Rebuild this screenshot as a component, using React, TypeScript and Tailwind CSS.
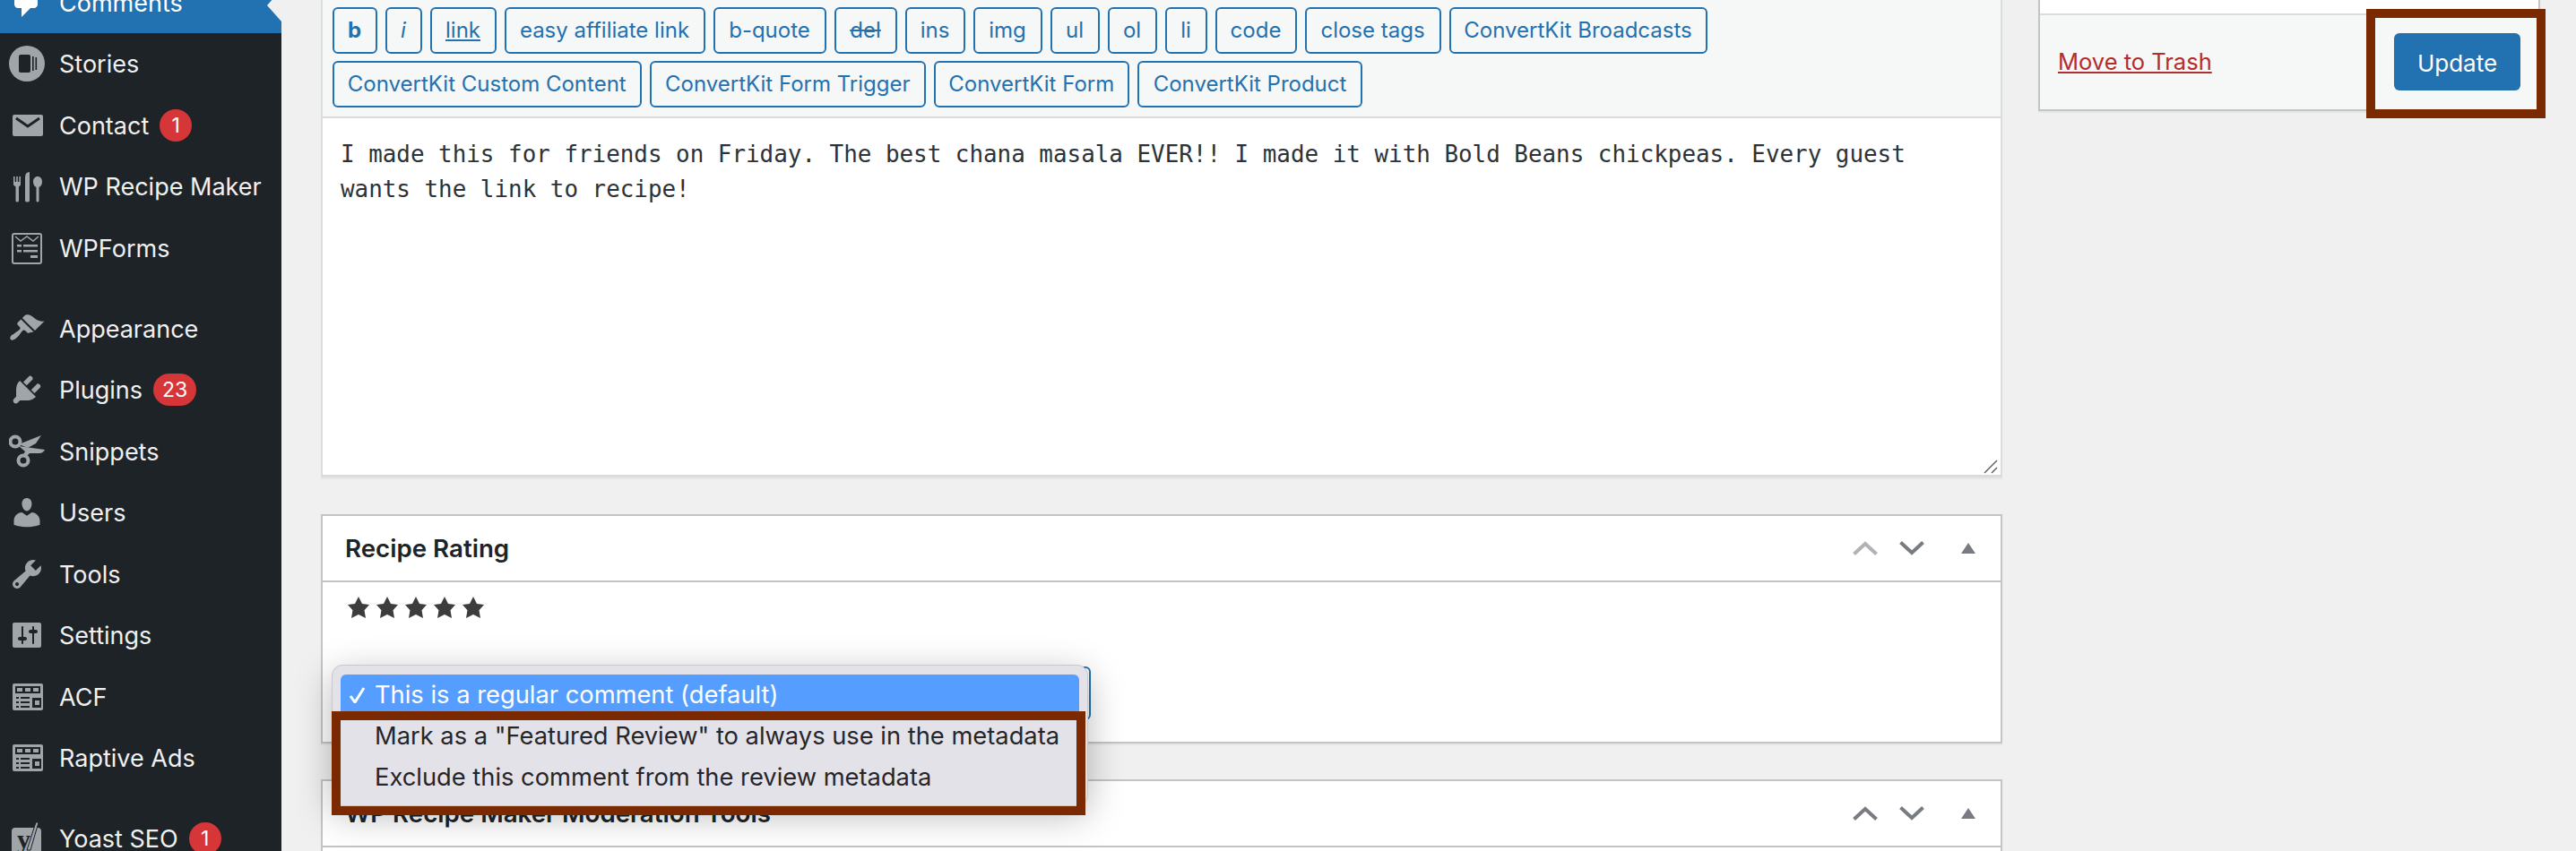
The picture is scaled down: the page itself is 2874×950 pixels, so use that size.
import React from "react";

const Dash = ({ d, className = "" }: { d: string; className?: string }) => (
  <svg viewBox="0 0 20 20" className={"w-[40px] h-[40px] shrink-0 fill-[#a0a5aa] " + className}>
    <path d={d} fillRule="evenodd" />
  </svg>
);

const Box = ({ children }: { children: React.ReactNode }) => (
  <svg viewBox="0 0 40 40" className="w-[40px] h-[40px] shrink-0">
    {children}
  </svg>
);

const G = "#a0a5aa";
const D = "#1d2327";

const TableIcon = () => (
  <Box>
    <rect x="4" y="5" width="34" height="30" rx="2" fill={G} />
    <rect x="7" y="8" width="28" height="8" fill={D} />
    <rect x="9" y="10" width="6" height="4" fill={G} />
    <rect x="18" y="10" width="6" height="4" fill={G} />
    <rect x="27" y="10" width="6" height="4" fill={G} />
    <rect x="8" y="20" width="3" height="2" fill={D} />
    <rect x="13" y="20" width="10" height="2" fill={D} />
    <rect x="8" y="25" width="3" height="2" fill={D} />
    <rect x="13" y="25" width="10" height="2" fill={D} />
    <rect x="8" y="30" width="3" height="2" fill={D} />
    <rect x="13" y="30" width="10" height="2" fill={D} />
    <rect x="26" y="21" width="10" height="11" fill={D} />
    <rect x="29" y="24" width="5" height="5" fill={G} />
  </Box>
);

const icons: Record<string, React.ReactNode> = {
  Stories: (
    <Box>
      <circle cx="20" cy="20" r="20" fill={G} />
      <rect x="11" y="10" width="13" height="20" rx="2" fill={D} />
      <rect x="26" y="12" width="1.6" height="16" fill={D} />
      <rect x="29.5" y="13" width="1.6" height="14" fill={D} />
    </Box>
  ),
  Contact: (
    <Box>
      <rect x="4" y="8" width="34" height="24" rx="2" fill={G} />
      <path d="M8 12 L21 21 L34 12" fill="none" stroke={D} strokeWidth="3" />
    </Box>
  ),
  "WP Recipe Maker": (
    <Box>
      <path d="M5 9h1.6v6h1.6V9h1.6v6h1.6V9H13v9.5l-2 2V36q0 1.5-1.8 1.5T7.5 36V20.5l-2.5-2z" fill={G} />
      <path d="M18 10q0-6 5-6V36q0 1.5-2.500 1.500T18 36z" fill={G} />
      <path d="M32 9c3 0 5 2.500 5 6s-2 5.500-3.500 6V36q0 1.500-1.500 1.500T30.500 36V21c-1.500-.5-3.500-2.500-3.500-6s2-6 5-6z" fill={G} />
    </Box>
  ),
  WPForms: (
    <Box>
      <rect x="4" y="4" width="32" height="33" rx="2" fill="none" stroke={G} strokeWidth="2" />
      <path d="M7 7l6 5 7-5 7 5 6-5" fill="none" stroke={G} strokeWidth="1.500" />
      <rect x="9" y="16" width="5" height="2.500" fill={G} />
      <rect x="16" y="16" width="16" height="2.500" fill={G} />
      <rect x="9" y="22" width="5" height="2.500" fill={G} />
      <rect x="16" y="22" width="16" height="2.500" fill={G} />
      <rect x="24" y="28" width="8" height="3" fill={G} />
    </Box>
  ),
  Appearance: (
    <Dash d="M14.48 11.06L7.41 3.99l1.5-1.5c.5-.56 2.3-.47 3.51.32 1.21.8 1.43 1.28 2.91 2.1 1.18.64 2.45 1.26 4.45.85zm-.71.71L6.7 4.7 4.93 6.47c-.39.39-.39 1.02 0 1.41l1.06 1.06c.39.39.39 1.03 0 1.42-.6.6-1.43 1.11-2.21 1.69-.35.26-.7.53-1.01.84C1.43 13.23 0 15 1 16c1 1 2.77-.43 4.12-1.77.31-.31.58-.66.84-1.01.58-.78 1.09-1.61 1.69-2.21.39-.39 1.03-.39 1.42 0l1.06 1.06c.39.39 1.02.39 1.41 0z" />
  ),
  Plugins: (
    <Dash d="M13.11 4.36L9.87 7.6 8 5.73l3.24-3.24c.35-.34 1.05-.2 1.56.32.52.51.66 1.21.31 1.55zm-8 1.77l.91-1.12 9.01 9.01-1.19.84c-.71.71-2.63 1.16-3.82 1.16H6.14L4.9 17.26c-.59.59-1.54.59-2.12 0-.59-.58-.59-1.53 0-2.12l1.24-1.24v-3.88c0-1.13.4-3.19 1.09-3.89zm7.26 3.97l3.24-3.24c.34-.35 1.04-.21 1.55.31.52.51.66 1.21.31 1.55l-3.24 3.25z" />
  ),
  Snippets: (
    <Box>
      <circle cx="7" cy="9" r="5.500" fill="none" stroke={G} strokeWidth="4" />
      <circle cx="16" cy="30" r="5.500" fill="none" stroke={G} strokeWidth="4" />
      <path d="M11 12L36 2l-6 9-9 5z" fill={G} />
      <path d="M11 14l29 4q-2 4-6 4H23l-5 5-3-2 3-5z" fill={G} />
    </Box>
  ),
  Users: (
    <Dash d="M10 9.25c-2.27 0-2.73-3.44-2.73-3.44C7 4.02 7.82 2 9.97 2c2.16 0 2.98 2.02 2.71 3.81 0 0-.41 3.44-2.68 3.44zm0 2.57L12.72 10c2.39 0 4.52 2.33 4.52 4.53v2.49s-3.65 1.13-7.24 1.13c-3.65 0-7.24-1.13-7.24-1.13v-2.49c0-2.25 1.94-4.48 4.47-4.48z" />
  ),
  Tools: (
    <Dash d="M16.68 9.77c-1.34 1.34-3.3 1.67-4.95.99l-5.41 6.52c-.99.99-2.59.99-3.58 0s-.99-2.59 0-3.57l6.52-5.42c-.68-1.65-.35-3.61.99-4.95 1.28-1.28 3.12-1.62 4.72-1.06l-2.89 2.89 2.82 2.82 2.86-2.87c.53 1.58.18 3.39-1.08 4.65zM3.81 16.21c.4.39 1.04.39 1.43 0 .4-.4.4-1.04 0-1.43-.39-.4-1.03-.4-1.43 0-.39.39-.39 1.03 0 1.43z" />
  ),
  Settings: (
    <Dash d="M18 16V4c0-.55-.45-1-1-1H3c-.55 0-1 .45-1 1v12c0 .55.45 1 1 1h14c.55 0 1-.45 1-1zM8 11h1c.55 0 1 .45 1 1s-.45 1-1 1H8v1.5c0 .28-.22.5-.5.5s-.5-.22-.5-.5V13H6c-.55 0-1-.45-1-1s.45-1 1-1h1V5.5c0-.28.22-.5.5-.5s.5.22.5.5V11zm5-2h-1c-.55 0-1-.45-1-1s.45-1 1-1h1V5.500c0-.28.22-.5.5-.5s.5.22.5.5V7h1c.55 0 1 .45 1 1s-.45 1-1 1h-1v5.500c0 .28-.22.5-.5.5s-.5-.22-.5-.5V9z" />
  ),
  ACF: <TableIcon />,
  "Raptive Ads": <TableIcon />,
  "Yoast SEO": (
    <Box>
      <rect x="3" y="8" width="33" height="32" rx="4" fill={G} />
      <text x="9" y="31" fontFamily="'Liberation Serif', serif" fontWeight="700" fontSize="30" fill={D}>y</text>
      <path d="M20 33L30 2h3L24 33z" fill={G} stroke={D} strokeWidth="1" />
    </Box>
  ),
};

const menu: { name: string; badge?: string; gap?: boolean }[] = [
  { name: "Stories" },
  { name: "Contact", badge: "1" },
  { name: "WP Recipe Maker" },
  { name: "WPForms" },
  { name: "Appearance", gap: true },
  { name: "Plugins", badge: "23" },
  { name: "Snippets" },
  { name: "Users" },
  { name: "Tools" },
  { name: "Settings" },
  { name: "ACF" },
  { name: "Raptive Ads" },
  { name: "Yoast SEO", badge: "1", gap: true },
];

const row1: [string, string][] = [
  ["b", "w-[50px] font-bold"],
  ["i", "w-[41px] italic"],
  ["link", "w-[74px] underline"],
  ["easy affiliate link", "w-[224px]"],
  ["b-quote", "w-[126px]"],
  ["del", "w-[70px] line-through"],
  ["ins", "w-[67px]"],
  ["img", "w-[77px]"],
  ["ul", "w-[55px]"],
  ["ol", "w-[55px]"],
  ["li", "w-[47px]"],
  ["code", "w-[91px]"],
  ["close tags", "w-[152px]"],
  ["ConvertKit Broadcasts", "w-[288px]"],
];
const row2: [string, string][] = [
  ["ConvertKit Custom Content", "w-[345.5px]"],
  ["ConvertKit Form Trigger", "w-[307.5px]"],
  ["ConvertKit Form", "w-[218.5px]"],
  ["ConvertKit Product", "w-[251px]"],
];

const QButton = ({ label, cls }: { label: string; cls: string }) => (
  <button className={"h-[52px] rounded-[6px] border-2 border-[#2271b1] bg-[#f6f7f7] text-[#2271b1] text-[24px] text-center whitespace-nowrap " + cls}>
    {label}
  </button>
);

const HeaderTools = ({ upDisabled }: { upDisabled?: boolean }) => (
  <div className="flex items-center shrink-0">
    <svg viewBox="0 0 28 16" className="w-[28px] h-[16px]">
      <path d="M1.500 14.500L14 3l12.500 11.500" fill="none" strokeWidth="4" className={upDisabled ? "stroke-[#b0b2b5]" : "stroke-[#787c82]"} />
    </svg>
    <svg viewBox="0 0 28 16" className="w-[28px] h-[16px] ml-[24px]">
      <path d="M1.500 1.500L14 13 26.500 1.500" fill="none" strokeWidth="4" className="stroke-[#787c82]" />
    </svg>
    <svg viewBox="0 0 16 12" className="w-[16px] h-[12px] ml-[41px] mr-[28px]">
      <path d="M8 0l8 12H0z" className="fill-[#787c82]" />
    </svg>
  </div>
);

export default function App() {
  return (
    <div className="relative flex w-[2874px] h-[950px] overflow-hidden bg-[#f0f0f0] font-['Inter',sans-serif]">
      {/* Admin sidebar */}
      <aside className="relative w-[314px] h-[950px] shrink-0 bg-[#1d2327] text-[#f0f0f1] text-[27px]">
        <div className="relative flex items-center h-[68.500px] mt-[-31.500px] pl-[10px] bg-[#2271b1] text-white">
          <Dash className="fill-white" d="M5 2h9c1.100 0 2 .9 2 2v7c0 1.100-.9 2-2 2h-2l-5 5v-5H5c-1.100 0-2-.9-2-2V4c0-1.100.9-2 2-2z" />
          <span className="ml-[16px] pt-[2px]">Comments</span>
          <svg viewBox="0 0 16 36" className="absolute right-0 bottom-[13px] w-[16px] h-[36px] fill-[#f0f0f0]">
            <path d="M16 0v36L0 18z" />
          </svg>
        </div>
        {menu.map((m) => (
          <div key={m.name} className={"flex items-center h-[68.500px] pl-[10px] whitespace-nowrap " + (m.gap ? "mt-[21.500px]" : "")}>
            {icons[m.name]}
            <span className="ml-[16px] pt-[2px]">{m.name}</span>
            {m.badge && (
              <span className="ml-[12px] flex items-center justify-center min-w-[36px] h-[36px] px-[10px] rounded-full bg-[#d63638] text-white text-[23px]">
                {m.badge}
              </span>
            )}
          </div>
        ))}
      </aside>

      {/* Main column */}
      <main className="w-[1876px] ml-[44px] shrink-0 flex flex-col">
        <section className="border-x-2 border-b-[3px] border-[#dcdcde] bg-white h-[533px] shrink-0 relative shadow-[0_2px_1px_rgba(0,0,0,0.04)]">
          <div className="bg-[#f6f7f7] border-b-2 border-[#dcdcde] h-[132px] pt-[8px] pl-[10.500px] flex flex-col gap-[8px]">
            <div className="flex gap-[9px]">
              {row1.map(([l, c]) => (
                <QButton key={l} label={l} cls={c} />
              ))}
            </div>
            <div className="flex gap-[9px]">
              {row2.map(([l, c]) => (
                <QButton key={l} label={l} cls={c} />
              ))}
            </div>
          </div>
          <p className="pt-[21px] px-[20px] font-['DejaVu_Sans_Mono',monospace] text-[25.900px] leading-[39px] text-[#2c3338]">
            I made this for friends on Friday. The best chana masala EVER!! I made it with Bold Beans chickpeas. Every guest wants the link to recipe!
          </p>
          <svg viewBox="0 0 16 16" className="absolute right-[3px] bottom-[1px] w-[16px] h-[16px] stroke-[#60646a]" fill="none" strokeWidth="1.500">
            <path d="M1 15L15 1M9 15l6-6" />
          </svg>
        </section>

        <section className="relative mt-[41px] h-[256px] shrink-0 border-2 border-[#c3c4c7] bg-white shadow-[0_2px_1px_rgba(0,0,0,0.04)]">
          <header className="flex items-center justify-between h-[74px] border-b-2 border-[#c3c4c7] pl-[25px]">
            <h2 className="pt-[2px] text-[27.700px] font-semibold text-[#1d2327]">Recipe Rating</h2>
            <HeaderTools upDisabled />
          </header>
          <div className="flex gap-[8px] pl-[28px] pt-[16px]">
            {[0, 1, 2, 3, 4].map((i) => (
              <svg key={i} viewBox="1 1 18 18" className="w-[24px] h-[24px] fill-[#3c3c3c]">
                <path d="M10 1l3 6 6 .75-4.120 4.620L16 19l-6-3-6 3 1.130-6.630L1 7.750 7 7z" />
              </svg>
            ))}
          </div>
          <div className="ml-[13px] mt-[54px] w-[844px] h-[60px] rounded-[6px] border-2 border-[#2271b1] bg-white" />
        </section>

        <section className="mt-[40px] h-[200px] shrink-0 border-2 border-[#c3c4c7] bg-white">
          <header className="flex items-center justify-between h-[74px] border-b-2 border-[#c3c4c7] pl-[25px]">
            <h2 className="pt-[2px] text-[27.700px] font-semibold text-[#1d2327] whitespace-nowrap">WP Recipe Maker Moderation Tools</h2>
            <HeaderTools />
          </header>
        </section>
      </main>

      {/* Publish box */}
      <aside className="w-[560px] ml-[40px] shrink-0">
        <div className="h-[124px] border-x-2 border-b-2 border-[#c3c4c7] bg-white shadow-[0_2px_1px_rgba(0,0,0,0.04)]">
          <div className="h-[17px] border-b-2 border-[#dcdcde]" />
          <div className="h-[105px] bg-[#f6f7f7] flex items-center justify-between pl-[20px] pr-[20px]">
            <a className="text-[25.500px] text-[#b32d2e] underline">Move to Trash</a>
            <button className="w-[141px] h-[64px] mt-[-1px] pt-[2px] rounded-[6px] bg-[#2271b1] text-white text-[26px]">Update</button>
          </div>
        </div>
      </aside>

      {/* Native select menu over the page */}
      <div className="absolute left-[370px] top-[742px] w-[844px] h-[158px] rounded-[12px] bg-[#e3e2e8] border border-[#c8c8cc] shadow-[0_10px_40px_rgba(0,0,0,0.28)] pt-[10px] px-[9px] text-[27.300px] text-[#26262a] whitespace-nowrap">
        <div className="flex items-center h-[46px] rounded-[6px] bg-[#559eff] text-white">
          <svg viewBox="0 0 19 18" className="w-[19px] h-[18px] ml-[9px] mr-[10px] shrink-0" fill="none" strokeWidth="3" stroke="white">
            <path d="M2 10l5 7L17 1" />
          </svg>
          <span className="pt-[1px]">This is a regular comment (default)</span>
        </div>
        <div className="flex items-center h-[46px] pl-[38px]">Mark as a "Featured Review" to always use in the metadata</div>
        <div className="flex items-center h-[46px] pl-[38px]">Exclude this comment from the review metadata</div>
      </div>

      {/* Annotation frames */}
      <div className="absolute left-[370px] top-[794px] w-[841px] h-[116px] border-[10px] border-[#7a2900]" />
      <div className="absolute left-[2640px] top-[10px] w-[200px] h-[122px] border-[10px] border-[#7a2900]">
        <div className="absolute inset-0 border-t-2 border-[#f6f7f7]" />
      </div>
    </div>
  );
}
